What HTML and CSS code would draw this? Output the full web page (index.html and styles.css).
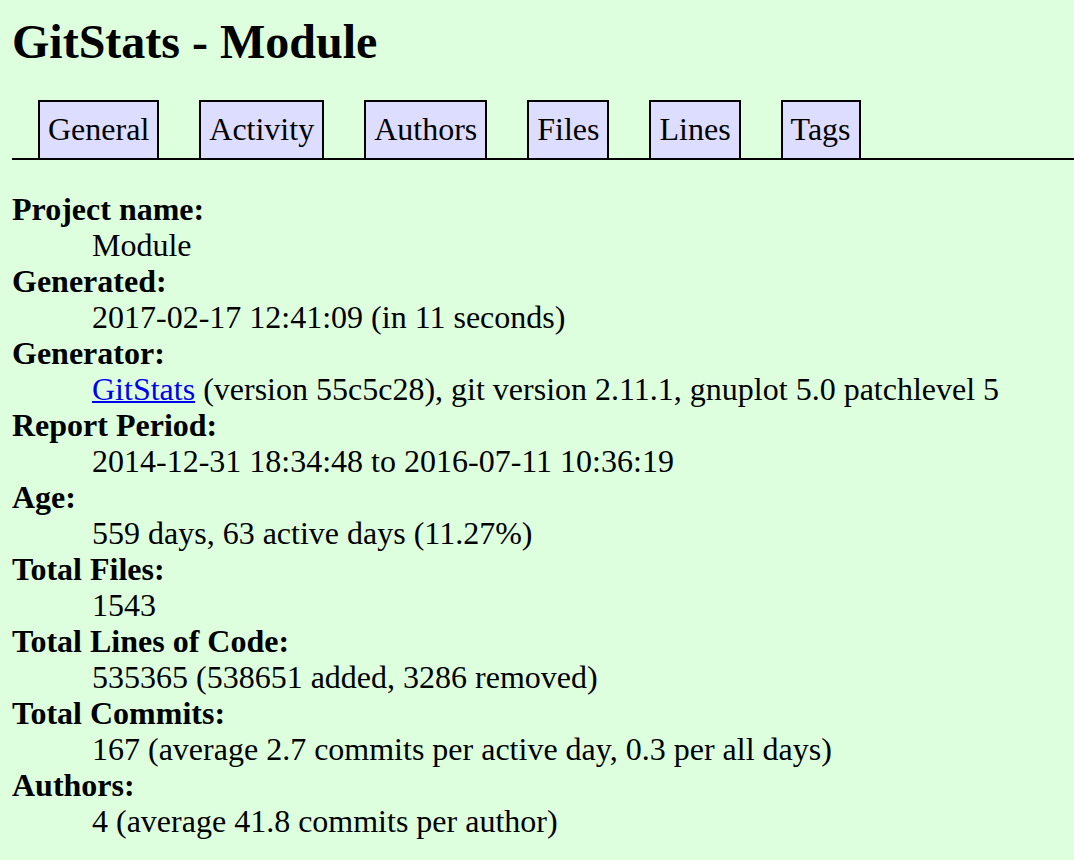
FILE: index.html
```html
<!DOCTYPE html>
<html lang="en">
<head>
<meta charset="utf-8">
<title>GitStats - Module</title>
<link rel="stylesheet" href="styles.css">
</head>
<body>
<h1 class="title">GitStats - Module</h1>
<nav class="nav">
<ul class="tabs">
<li><a class="tab" href="#general">General</a></li>
<li><a class="tab" href="#activity">Activity</a></li>
<li><a class="tab" href="#authors">Authors</a></li>
<li><a class="tab" href="#files">Files</a></li>
<li><a class="tab" href="#lines">Lines</a></li>
<li><a class="tab" href="#tags">Tags</a></li>
</ul>
</nav>
<dl class="stats">
<dt>Project name:</dt><dd>Module</dd>
<dt>Generated:</dt><dd>2017-02-17 12:41:09 (in 11 seconds)</dd>
<dt>Generator:</dt><dd><a href="#gitstats">GitStats</a> (version 55c5c28), git version 2.11.1, gnuplot 5.0 patchlevel 5</dd>
<dt>Report Period:</dt><dd>2014-12-31 18:34:48 to 2016-07-11 10:36:19</dd>
<dt>Age:</dt><dd>559 days, 63 active days (11.27%)</dd>
<dt>Total Files:</dt><dd>1543</dd>
<dt>Total Lines of Code:</dt><dd>535365 (538651 added, 3286 removed)</dd>
<dt>Total Commits:</dt><dd>167 (average 2.7 commits per active day, 0.3 per all days)</dd>
<dt>Authors:</dt><dd>4 (average 41.8 commits per author)</dd>
</dl>
</body>
</html>
```
FILE: styles.css
```css
body {
  margin: 0;
  padding: 16px 0 20px 12px;
  background: #dfd;
  color: #000;
  font-family: "Liberation Serif", "Times New Roman", serif;
  font-size: 32px;
  line-height: 36px;
}

.title {
  margin: 0 0 32px;
  font-size: 48px;
  line-height: 52px;
}

.nav {
  border-bottom: 2px solid #000;
}

.tabs {
  display: flex;
  flex-wrap: wrap;
  gap: 0 40px;
  margin: 0;
  padding: 0 26px;
  list-style: none;
}

.tab {
  display: block;
  padding: 9px 8px 11px;
  border: 2px solid #000;
  border-bottom: 0;
  background: #ddf;
  color: #000;
  text-decoration: none;
}

.stats {
  margin: 31px 0 0;
}

.stats dt {
  font-weight: bold;
}

.stats dd {
  margin-left: 80px;
}

.stats a {
  color: #00e;
  text-decoration-thickness: 2px;
}
```
